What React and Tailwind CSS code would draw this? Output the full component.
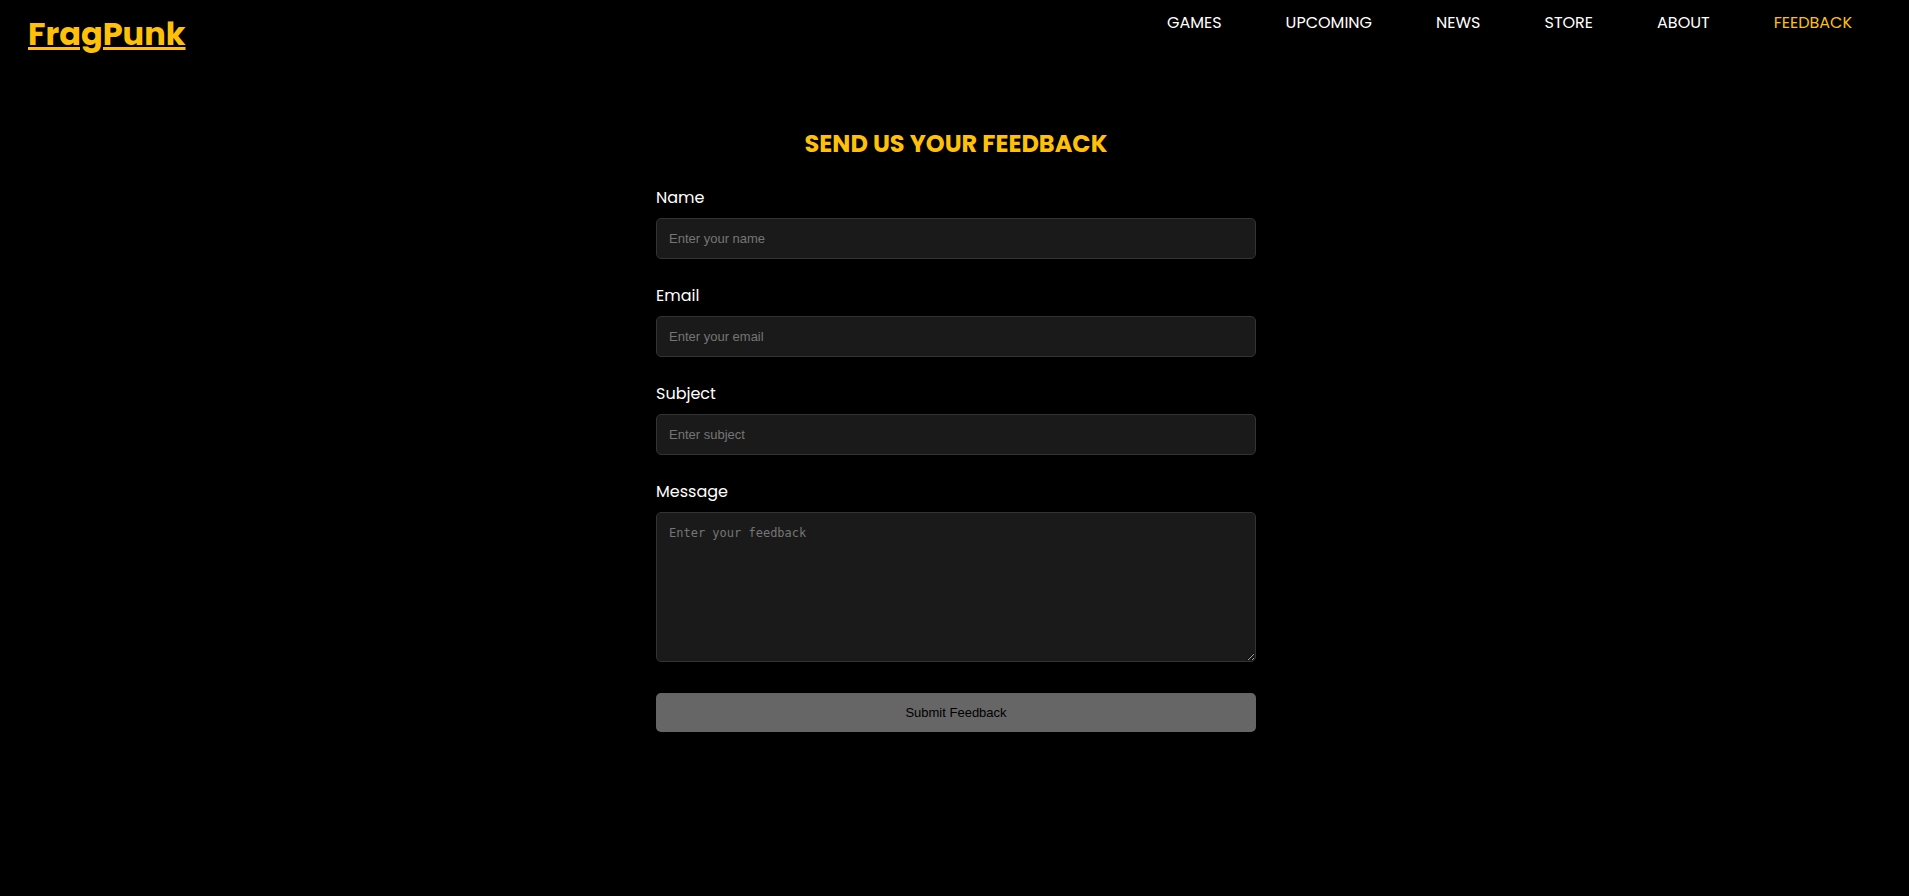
const links = ["Games", "Upcoming", "News", "Store", "About", "Feedback"];

const fields = [
  { id: "name", label: "Name", type: "text", placeholder: "Enter your name" },
  { id: "email", label: "Email", type: "email", placeholder: "Enter your email" },
  { id: "subject", label: "Subject", type: "text", placeholder: "Enter subject" },
];

const boxClass =
  "w-full rounded-[5px] border border-[#333] bg-[#1a1a1a] p-3 text-white placeholder:text-[#757575] placeholder:opacity-100";

function Header() {
  return (
    <header className="flex items-start justify-between pt-2 pr-[57px] pl-7">
      <a
        href="#home"
        className="pt-1 text-[32px] leading-[44px] font-bold text-[#ffc107] underline decoration-[3px]"
      >
        FragPunk
      </a>
      <nav>
        <ul className="flex flex-wrap gap-16 leading-[30px] uppercase">
          {links.map((link) => (
            <li key={link}>
              <a
                href={`#${link.toLowerCase()}`}
                className={link === "Feedback" ? "text-[#ffc107]" : "text-white"}
              >
                {link}
              </a>
            </li>
          ))}
        </ul>
      </nav>
    </header>
  );
}

function FeedbackForm() {
  return (
    <form className="mx-auto flex w-full max-w-[600px] flex-col" onSubmit={(e) => e.preventDefault()}>
      {fields.map(({ id, label, type, placeholder }) => (
        <div key={id} className="mb-[25px] flex flex-col gap-2">
          <label htmlFor={id}>{label}</label>
          <input
            id={id}
            type={type}
            placeholder={placeholder}
            className={`${boxClass} font-['Liberation_Sans',sans-serif] text-[13px] leading-[15px]`}
          />
        </div>
      ))}
      <div className="mb-[31px] flex flex-col gap-2">
        <label htmlFor="message">Message</label>
        <textarea
          id="message"
          placeholder="Enter your feedback"
          className={`${boxClass} h-[150px] resize font-['DejaVu_Sans_Mono',monospace] text-[12px] leading-[16px]`}
        />
      </div>
      <button
        type="submit"
        className="rounded-[5px] bg-[#666] p-3 font-['Liberation_Sans',sans-serif] text-[13px] leading-[15px] text-black"
      >
        Submit Feedback
      </button>
    </form>
  );
}

export default function App() {
  return (
    <div className="min-h-screen bg-black font-[Poppins,Inter,sans-serif] text-base text-white">
      <Header />
      <main className="pt-[70px] pr-[17px] pb-16 pl-5">
        <h1 className="mb-6 text-center text-2xl leading-9 font-bold text-[#ffc107] uppercase">
          Send us your feedback
        </h1>
        <FeedbackForm />
      </main>
    </div>
  );
}
